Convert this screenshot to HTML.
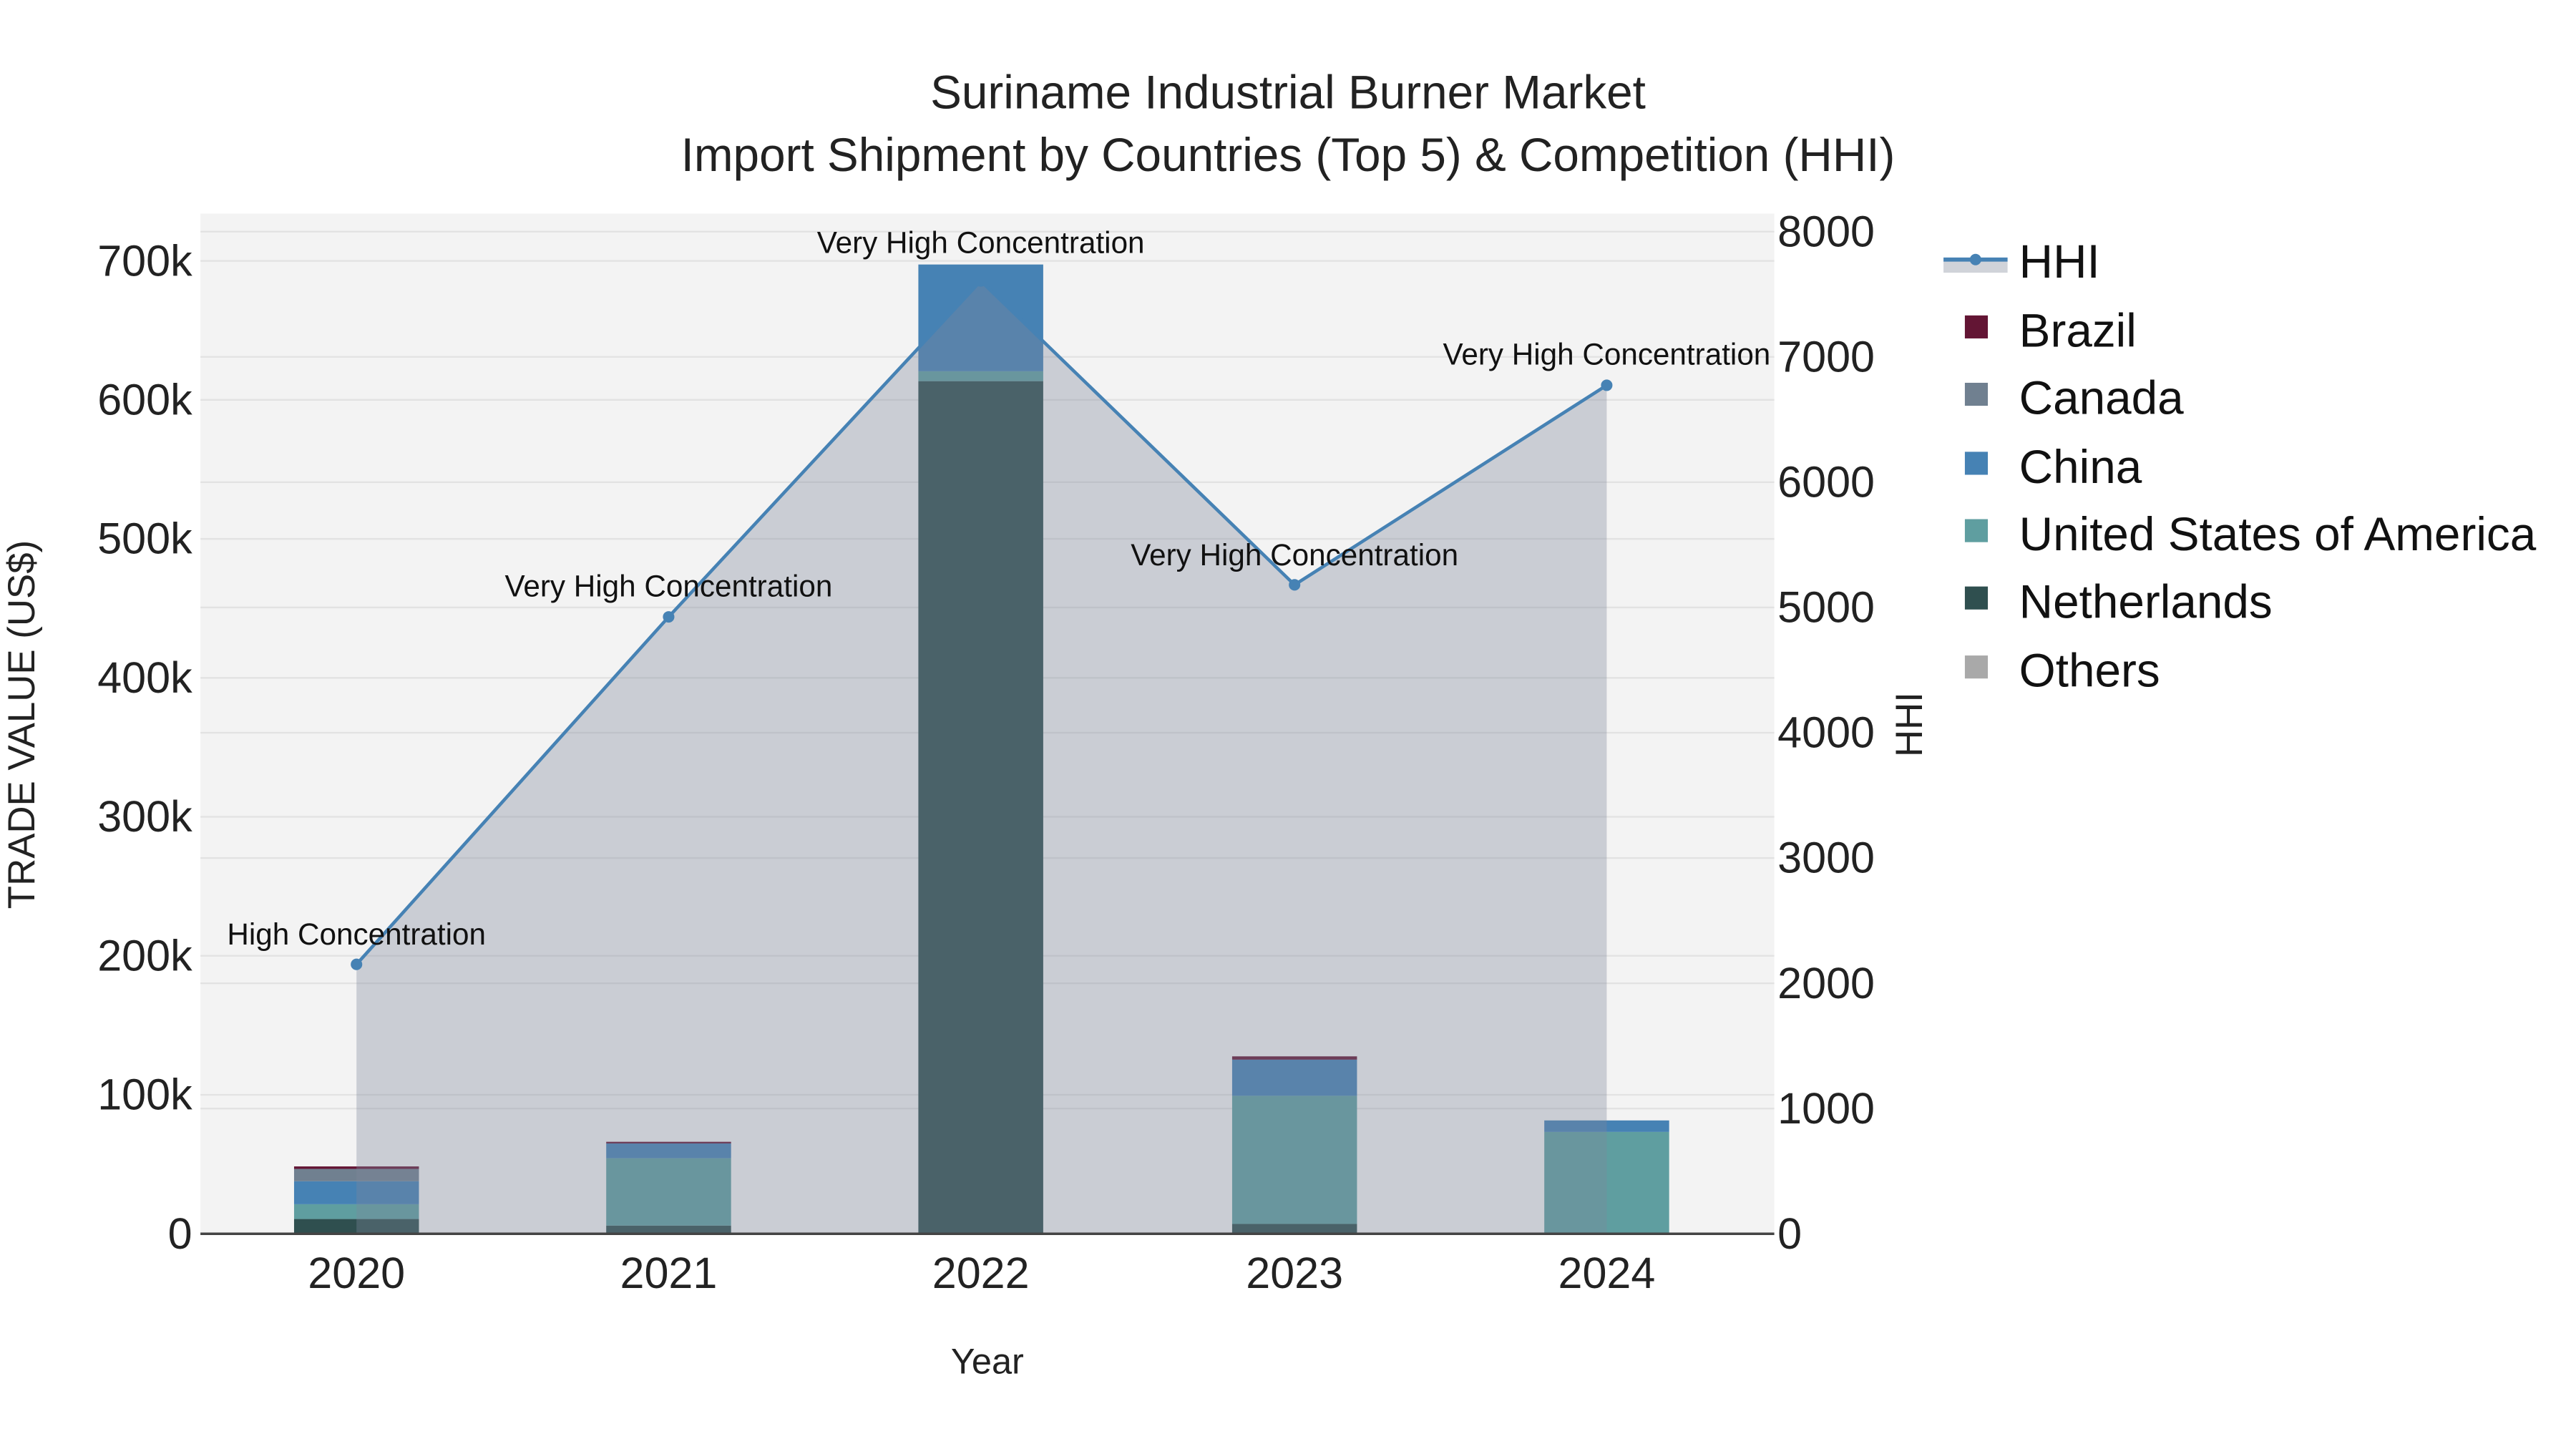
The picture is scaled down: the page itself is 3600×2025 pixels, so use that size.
<!DOCTYPE html>
<html><head><meta charset="utf-8"><style>html,body{margin:0;padding:0;background:#fff;}svg{display:block}</style></head>
<body>
<svg width="3600" height="2025" viewBox="0 0 1568 882" preserveAspectRatio="none" xmlns="http://www.w3.org/2000/svg" font-family="Liberation Sans, sans-serif">
<rect x="0" y="0" width="1568" height="882" fill="#fff"/>
<rect x="122" y="130" width="958" height="621" fill="#f3f3f3"/>
<g stroke="#e2e2e2" stroke-width="1">
<line x1="122" x2="1080" y1="666.4" y2="666.4"/><line x1="122" x2="1080" y1="581.8" y2="581.8"/><line x1="122" x2="1080" y1="497.2" y2="497.2"/><line x1="122" x2="1080" y1="412.6" y2="412.6"/><line x1="122" x2="1080" y1="328" y2="328"/><line x1="122" x2="1080" y1="243.4" y2="243.4"/><line x1="122" x2="1080" y1="158.8" y2="158.8"/>
<line x1="122" x2="1080" y1="674.75" y2="674.75"/><line x1="122" x2="1080" y1="598.5" y2="598.5"/><line x1="122" x2="1080" y1="522.25" y2="522.25"/><line x1="122" x2="1080" y1="446" y2="446"/><line x1="122" x2="1080" y1="369.75" y2="369.75"/><line x1="122" x2="1080" y1="293.5" y2="293.5"/><line x1="122" x2="1080" y1="217.25" y2="217.25"/><line x1="122" x2="1080" y1="141" y2="141"/>
</g>
<g>
<rect x="179" y="742" width="76" height="9" fill="#2f4f4f"/>
<rect x="179" y="733" width="76" height="9" fill="#5f9ea0"/>
<rect x="179" y="719" width="76" height="14" fill="#4682b4"/>
<rect x="179" y="711.5" width="76" height="7.5" fill="#708090"/>
<rect x="179" y="710" width="76" height="1.5" fill="#631534"/>

<rect x="369" y="746" width="76" height="5" fill="#2f4f4f"/>
<rect x="369" y="705" width="76" height="41" fill="#5f9ea0"/>
<rect x="369" y="696" width="76" height="9" fill="#4682b4"/>
<rect x="369" y="695" width="76" height="1" fill="#631534"/>

<rect x="559" y="232" width="76" height="519" fill="#2f4f4f"/>
<rect x="559" y="226" width="76" height="6" fill="#5f9ea0"/>
<rect x="559" y="161" width="76" height="65" fill="#4682b4"/>

<rect x="750" y="745" width="76" height="6" fill="#2f4f4f"/>
<rect x="750" y="667" width="76" height="78" fill="#5f9ea0"/>
<rect x="750" y="645" width="76" height="22" fill="#4682b4"/>
<rect x="750" y="643" width="76" height="2" fill="#631534"/>

<rect x="940" y="689" width="76" height="62" fill="#5f9ea0"/>
<rect x="940" y="682" width="76" height="7" fill="#4682b4"/>
</g>
<polygon points="217,587 407,375.5 597,171 788,356 978,234.5 978,751 217,751" fill="rgba(126,135,154,0.35)"/>
<polyline points="217,587 407,375.5 597,171 788,356 978,234.5" fill="none" stroke="#4682b4" stroke-width="2"/>
<g fill="#4682b4"><circle cx="217" cy="587" r="3.5"/><circle cx="407" cy="375.5" r="3.5"/><circle cx="597" cy="171" r="3.5"/><circle cx="788" cy="356" r="3.5"/><circle cx="978" cy="234.5" r="3.5"/></g>
<line x1="122" x2="1080" y1="751" y2="751" stroke="#444" stroke-width="1.5"/>
<g font-size="18.4" text-anchor="middle" fill="#111">
<text x="217" y="575">High Concentration</text>
<text x="407" y="363">Very High Concentration</text>
<text x="597" y="154">Very High Concentration</text>
<text x="788" y="344">Very High Concentration</text>
<text x="978" y="222">Very High Concentration</text>
</g>
<g font-size="28.6" text-anchor="middle" fill="#222">
<text x="784" y="66">Suriname Industrial Burner Market</text>
<text x="784" y="104">Import Shipment by Countries (Top 5) &amp; Competition (HHI)</text>
</g>
<g font-size="26.6" text-anchor="end" fill="#222">
<text x="117" y="760">0</text><text x="117" y="675.4">100k</text><text x="117" y="590.8">200k</text><text x="117" y="506.2">300k</text><text x="117" y="421.6">400k</text><text x="117" y="337">500k</text><text x="117" y="252.4">600k</text><text x="117" y="167.8">700k</text>
</g>
<g font-size="26.6" text-anchor="start" fill="#222">
<text x="1082" y="760">0</text><text x="1082" y="683.75">1000</text><text x="1082" y="607.5">2000</text><text x="1082" y="531.25">3000</text><text x="1082" y="455">4000</text><text x="1082" y="378.75">5000</text><text x="1082" y="302.5">6000</text><text x="1082" y="226.25">7000</text><text x="1082" y="150">8000</text>
</g>
<g font-size="26.6" text-anchor="middle" fill="#222">
<text x="217" y="784">2020</text><text x="407" y="784">2021</text><text x="597" y="784">2022</text><text x="788" y="784">2023</text><text x="978" y="784">2024</text>
</g>
<text x="601" y="836" font-size="22" text-anchor="middle" fill="#222">Year</text>
<text transform="translate(21,441) rotate(-90)" font-size="23" text-anchor="middle" fill="#222">TRADE VALUE (US$)</text>
<text transform="translate(1170,441) rotate(-90)" font-size="23" text-anchor="middle" fill="#222">HHI</text>
<rect x="1183" y="159" width="39" height="7" fill="#d0d3d9"/>
<line x1="1183" x2="1222" y1="158" y2="158" stroke="#4682b4" stroke-width="2.5"/>
<circle cx="1202.5" cy="158" r="3.5" fill="#4682b4"/>
<g>
<rect x="1196" y="192" width="14" height="14" fill="#631534"/>
<rect x="1196" y="233" width="14" height="14" fill="#708090"/>
<rect x="1196" y="275" width="14" height="14" fill="#4682b4"/>
<rect x="1196" y="316" width="14" height="14" fill="#5f9ea0"/>
<rect x="1196" y="357" width="14" height="14" fill="#2f4f4f"/>
<rect x="1196" y="399" width="14" height="14" fill="#a9a9a9"/>
</g>
<g font-size="28.6" fill="#111">
<text x="1229" y="169">HHI</text>
<text x="1229" y="211">Brazil</text>
<text x="1229" y="252">Canada</text>
<text x="1229" y="294">China</text>
<text x="1229" y="335">United States of America</text>
<text x="1229" y="376">Netherlands</text>
<text x="1229" y="418">Others</text>
</g>
</svg>
</body></html>
